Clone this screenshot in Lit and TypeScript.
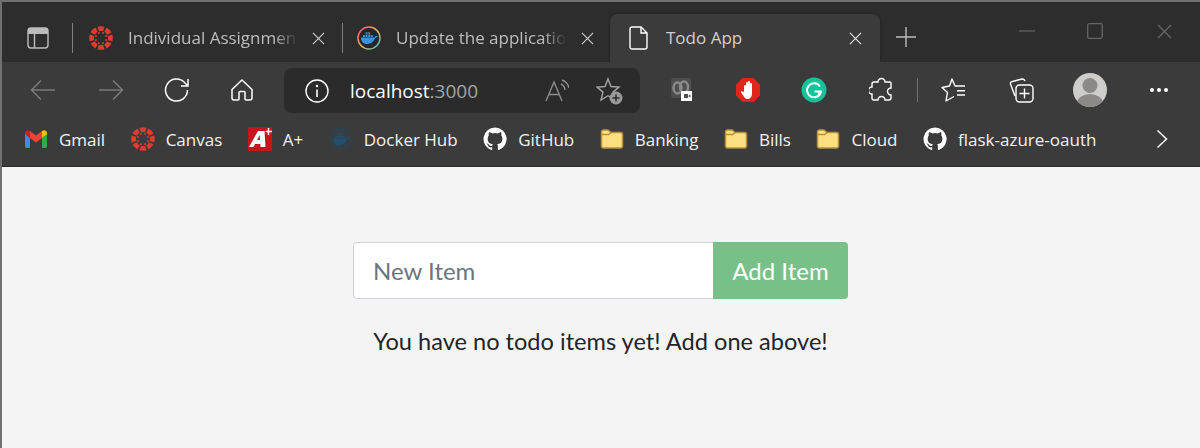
import { LitElement, html, css, svg } from "lit";
import { customElement } from "lit/decorators.js";

const canvas = (size = 24) => html`<svg width=${size} height=${size} viewBox="0 0 24 24" fill="#e13c30">
  ${[0, 45, 90, 135, 180, 225, 270, 315].map(a => svg`<g transform="rotate(${a} 12 12)"><path d="M8.55 .72A11.8 11.8 0 0 1 15.45 .72L14.05 5.31A7 7 0 0 0 9.95 5.31Z"/><circle cx="12" cy="6.5" r="1" transform="rotate(22.5 12 12)"/></g>`)}
</svg>`;
const ghPath = "M12 .5a11.500 11.500 0 0 0-3.640 22.410c.58.110.79-.25.79-.550v-2.100c-3.200.7-3.880-1.370-3.880-1.370-.52-1.330-1.280-1.680-1.280-1.680-1.040-.71.08-.7.08-.7 1.160.08 1.770 1.190 1.770 1.190 1.030 1.760 2.700 1.250 3.350.96.100-.75.400-1.250.730-1.540-2.550-.29-5.240-1.280-5.240-5.690 0-1.260.45-2.280 1.190-3.090-.12-.29-.52-1.460.11-3.050 0 0 .97-.31 3.170 1.180a11 11 0 0 1 5.770 0c2.200-1.490 3.170-1.180 3.170-1.180.63 1.590.23 2.760.11 3.050.74.81 1.190 1.830 1.190 3.090 0 4.420-2.690 5.390-5.250 5.680.41.360.78 1.050.78 2.120v3.140c0 .31.21.670.800.550A11.500 11.500 0 0 0 12 .5z";
const github = () => html`<svg width="24" height="24" viewBox="0 0 24 24"><path fill="#fff" d=${ghPath}/></svg>`;
const folder = () => html`<svg width="24" height="24" viewBox="0 0 24 24"><path d="M1.500 5a2 2 0 0 1 2-2h4.500l3 2.500h9.500a2 2 0 0 1 2 2V19a2 2 0 0 1-2 2h-17a2 2 0 0 1-2-2z" fill="#fedf82" stroke="#b8923a" stroke-width="1.500"/><path d="M1.500 7.500h7l3-2" fill="none" stroke="#b8923a" stroke-width="1.500"/></svg>`;
const docker = (fill: string) => svg`<path fill=${fill} d="M4 11.500h13.500c.6-1.200 1.700-1.700 3.200-1.300-.6 1.200-1.500 1.800-2.700 1.900C16.800 16 14 18 10 18c-4 0-6-2.600-6-6.500z"/>
  <g fill=${fill}><rect x="6" y="9" width="2" height="2"/><rect x="8.600" y="9" width="2" height="2"/><rect x="11.200" y="9" width="2" height="2"/><rect x="8.600" y="6.400" width="2" height="2"/><rect x="11.200" y="6.400" width="2" height="2"/><rect x="13.800" y="9" width="2" height="2"/></g>`;
const x = (s: number, c: string, w = 1.300) => html`<svg width=${s} height=${s} viewBox="0 0 14 14"><path d="M1 1l12 12M13 1L1 13" stroke=${c} stroke-width=${w} fill="none"/></svg>`;

@customElement("app-root")
export class AppRoot extends LitElement {
  static styles = css`
    :host { display: block; width: 1200px; height: 448px; overflow: hidden; box-sizing: border-box; border-top: 2px solid #707070; border-left: 2px solid #707070; font-family: "Open Sans", "Noto Sans", sans-serif; background: #f4f4f4; }
    svg { display: block; flex: none; }
    .strip { height: 60px; box-sizing: border-box; background: #2d2d2d; display: flex; align-items: flex-end; }
    .tabmenu { width: 70px; height: 48px; display: flex; align-items: center; padding-left: 25px; box-sizing: border-box; flex: none; }
    .sep { width: 1px; height: 30px; background: #808080; flex: none; }
    .tabsep { margin-bottom: 9px; }
    .tab { height: 48px; display: flex; align-items: center; box-sizing: border-box; color: #bdbdbd; font-size: 17px; flex: none; position: relative; }
    .tab .title { white-space: nowrap; overflow: hidden; margin-left: 15px; margin-bottom: 2px; -webkit-mask-image: linear-gradient(90deg, #000 86%, transparent); mask-image: linear-gradient(90deg, #000 86%, transparent); }
    .tab1 { width: 269px; padding-left: 16px; }
    .tab1 .title { width: 170px; }
    .tab2 { width: 267px; padding-left: 14px; }
    .tab2 .title { width: 171px; }
    .tab .close { margin-left: auto; }
    .tab1 .close { margin-right: 17px; }
    .tab2 .close { margin-right: 16px; }
    .tab3 { width: 270px; padding-left: 19px; background: #3b3b3b; border-radius: 8px 8px 0 0; color: #d0d0d0; box-shadow: 0 0 3px rgba(0,0,0,.35); }
    .tab3 .close { margin-right: 18px; }
    .tab3 .title { margin-left: 17px; -webkit-mask-image: none; mask-image: none; }
    .plus { margin-left: 15px; align-self: flex-start; margin-top: 24px; }
    .win { position: absolute; top: 22px; }
    .win-min { left: 1019px; top: 30px; }
    .win-max { left: 1087px; top: 23px; }
    .win-close { left: 1157px; top: 24px; }
    .toolbar { height: 56px; background: #3b3b3b; position: relative; display: flex; align-items: center; }
    .tb-left { display: flex; align-items: center; width: 282px; padding-left: 28px; box-sizing: border-box; gap: 42px; flex: none; }
    .nudge { margin-left: -2px; }
    .addr { width: 356px; height: 45px; background: #2b2b2b; border-radius: 8px; display: flex; align-items: center; box-sizing: border-box; padding-left: 21px; flex: none; margin-top: 1px; }
    .url { margin-left: 21px; font-size: 19px; font-weight: 500; color: #fff; }
    .url span { color: #a5a5a5; font-weight: 400; }
    .addr .read { margin-left: auto; }
    .addstar { margin-left: 27px; margin-right: 16px; }
    .tb-right { display: flex; align-items: center; flex: 1; padding-left: 29px; }
    .i-people { margin-left: 1px; }
    .i-block { margin-left: 39px; }
    .i-gram { margin-left: 40px; }
    .i-ext { margin-left: 42px; }
    .tbsep { height: 24px; margin-left: 24px; background: #707070; }
    .i-fav { margin-left: 23px; }
    .i-coll { margin-left: 41px; }
    .i-avatar { margin-left: 39px; }
    .i-dots { margin-left: 42px; }
    .bar { height: 49px; background: #3b3b3b; display: flex; align-items: center; box-sizing: border-box; padding: 0 0 6px 22px; gap: 25.5px; color: #f2f2f2; font-size: 17px; white-space: nowrap; border-bottom: 1px solid #2b2b2b; }
    .bm { display: flex; align-items: center; gap: 11px; flex: none; }
    .more { margin-left: auto; margin-right: 32px; }
    .main { display: flex; flex-direction: column; align-items: center; padding: 75px 1px 0 0; font-family: Lato, sans-serif; color: #212529; }
    .form { display: flex; width: 495px; height: 57px; }
    .input { flex: 1; border: 1px solid #ced4da; border-right: 0; border-radius: 4px 0 0 4px; background: #fff; box-sizing: border-box; padding-left: 19px; display: flex; align-items: center; font-size: 24px; color: #6c757d; }
    .btn { width: 135px; background: #77c188; color: #fff; border-radius: 0 4px 4px 0; display: flex; align-items: center; justify-content: center; font-size: 24px; }
    .empty { margin-top: 24px; font-size: 23.6px; line-height: 36px; }
  `;

  render() {
    return html`
      <div class="strip">
        <div class="tabmenu"><svg width="22" height="22" viewBox="0 0 22 22"><rect x="1" y="1" width="20" height="20" rx="3" fill="none" stroke="#bcbcbc" stroke-width="1.400"/><path d="M1 2.500a2 2 0 0 1 2-1.500h16a2 2 0 0 1 2 1.500V7H1z" fill="#bcbcbc"/><path d="M7.500 7v14" stroke="#bcbcbc" stroke-width="1.400"/></svg></div>
        <div class="sep tabsep"></div>
        <div class="tab tab1">${canvas()}<span class="title">Individual Assignment</span><span class="close">${x(13, "#c8c8c8")}</span></div>
        <div class="sep tabsep"></div>
        <div class="tab tab2">
          <svg width="24" height="24" viewBox="0 0 24 24"><defs><linearGradient id="r" x1="0" y1="0" x2="1" y2="1"><stop offset="0" stop-color="#e04f8c"/><stop offset=".5" stop-color="#f2b84b"/><stop offset="1" stop-color="#35b6d6"/></linearGradient></defs><circle cx="12" cy="12" r="11" fill="#22252b" stroke="url(#r)" stroke-width="1.500"/>${docker("#3a94dc")}</svg>
          <span class="title">Update the application</span><span class="close">${x(13, "#c8c8c8")}</span></div>
        <div class="tab tab3">
          <svg width="20" height="24" viewBox="0 0 20 24"><path d="M3 1h9l6 6v14a2 2 0 0 1-2 2H3a2 2 0 0 1-2-2V3a2 2 0 0 1 2-2zM12 1v6h6" fill="none" stroke="#fff" stroke-width="1.400"/></svg>
          <span class="title">Todo App</span><span class="close">${x(13, "#e0e0e0")}</span></div>
        <svg class="plus" width="22" height="22" viewBox="0 0 22 22"><path d="M11 1v20M1 11h20" stroke="#bdbdbd" stroke-width="1.400"/></svg>
        <svg class="win win-min" width="16" height="2" viewBox="0 0 16 2"><path d="M0 1h16" stroke="#666" stroke-width="1.200"/></svg>
        <svg class="win win-max" width="16" height="16" viewBox="0 0 16 16"><rect x=".7" y=".7" width="14.600" height="14.600" rx="1.500" fill="none" stroke="#666" stroke-width="1.300"/></svg>
        <span class="win win-close">${x(15, "#666", 1.200)}</span>
      </div>
      <div class="toolbar">
        <div class="tb-left">
          <svg width="26" height="22" viewBox="0 0 26 22"><path d="M25 11H1.500M11 1.500L1.500 11l9.500 9.500" fill="none" stroke="#7a7a7a" stroke-width="1.500"/></svg>
          <svg width="26" height="22" viewBox="0 0 26 22"><path d="M1 11h23.500M15 1.500l9.500 9.500-9.500 9.500" fill="none" stroke="#7a7a7a" stroke-width="1.500"/></svg>
          <svg class="nudge" width="26" height="26" viewBox="0 0 26 26"><path d="M23.500 13A11 11 0 1 1 20.500 5.500L24 9M24 2v7h-7" fill="none" stroke="#fff" stroke-width="1.500"/></svg>
          <svg class="nudge" width="24" height="24" viewBox="0 0 24 24"><path d="M2 11.500L12 2l10 9.500V20a2 2 0 0 1-2 2h-4a1 1 0 0 1-1-1v-6.500a1 1 0 0 0-1-1h-4a1 1 0 0 0-1 1V21a1 1 0 0 1-1 1H4a2 2 0 0 1-2-2z" fill="none" stroke="#fff" stroke-width="1.500"/></svg>
        </div>
        <div class="addr">
          <svg width="24" height="24" viewBox="0 0 24 24"><circle cx="12" cy="12" r="11" fill="none" stroke="#fff" stroke-width="1.400"/><path d="M12 10.500V18" stroke="#fff" stroke-width="1.600"/><circle cx="12" cy="7" r="1.200" fill="#fff"/></svg>
          <span class="url">localhost<span>:3000</span></span>
          <svg class="read" width="24" height="24" viewBox="0 0 24 24"><path d="M1 22L9 3l8 19M4 15.500h10" fill="none" stroke="#8e8e8e" stroke-width="1.400"/><path d="M16 5a7 7 0 0 1 4 6M17 1a11 11 0 0 1 7 8" fill="none" stroke="#8e8e8e" stroke-width="1.400"/></svg>
          <svg class="addstar" width="28" height="28" viewBox="0 0 28 28"><path d="M12 2l3 7.500 8 .6-6 5 2 7.900-7-4.300-7 4.300 2-7.900-6-5 8-.6z" fill="none" stroke="#a5a5a5" stroke-width="1.400"/><circle cx="20" cy="21" r="6.500" fill="#9a9a9a"/><path d="M20 17.500v7M16.500 21h7" stroke="#2b2b2b" stroke-width="1.500"/></svg>
        </div>
        <div class="tb-right">
          <svg class="i-people" width="26" height="26" viewBox="0 0 26 26"><rect x="1" y="1" width="20" height="20" rx="3" fill="#4e4e4e"/><ellipse cx="7.500" cy="11" rx="4" ry="5.500" fill="none" stroke="#8a8a8a" stroke-width="2.500"/><ellipse cx="14" cy="10" rx="4" ry="5.500" fill="none" stroke="#8a8a8a" stroke-width="2.500"/><rect x="11" y="14" width="11" height="10" fill="#fff"/><path d="M14 17h4v4h-4zM18 19l2.500-1.500v3z" fill="#4e4e4e"/></svg>
          <svg class="i-block" width="26" height="26" viewBox="0 0 26 26"><path d="M7.500 1h11L25 7.500v11L18.500 25h-11L1 18.500v-11z" fill="#e1251b"/><path d="M9 15V9a1 1 0 0 1 2 0v3-6a1 1 0 0 1 2 0v6-7a1 1 0 0 1 2 0v7-5a1 1 0 0 1 2 0v9c0 4-2 6-4.500 6-2 0-3-1-4-3l-2.500-3.500c-.5-1 .7-1.800 1.500-1z" fill="#fff"/></svg>
          <svg class="i-gram" width="26" height="26" viewBox="0 0 26 26"><circle cx="13" cy="13" r="12.500" fill="#15c39a"/><path d="M19 9.500a7 7 0 1 0 1 5h-6.500M20 14.500l-2.500 3" fill="none" stroke="#fff" stroke-width="2"/></svg>
          <svg class="i-ext" width="24" height="26" viewBox="0 0 24 26"><path d="M9 5a3.500 3.500 0 0 1 7 0h5a1 1 0 0 1 1 1v5a3.500 3.500 0 0 0 0 7v3a2 2 0 0 1-2 2h-4a3.500 3.500 0 0 0-7 0H5a2 2 0 0 1-2-2v-4a3.500 3.500 0 0 1 0-7V7a2 2 0 0 1 2-2z" fill="none" stroke="#fff" stroke-width="1.400"/></svg>
          <div class="sep tbsep"></div>
          <svg class="i-fav" width="26" height="26" viewBox="0 0 26 26"><path d="M24 9H14L11 2 8.500 9 1 10.500 6.500 15.500 5 24 13 19.500" fill="none" stroke="#fff" stroke-width="1.400" stroke-linejoin="round"/><path d="M16 13.700h8M16 18h8" stroke="#fff" stroke-width="1.400"/></svg>
          <svg class="i-coll" width="26" height="26" viewBox="0 0 26 26"><path d="M7 19L2.500 7c-.3-1 .2-2 1.200-2.300L14 2c1.500-.3 2.500.5 3 2" fill="none" stroke="#fff" stroke-width="1.400"/><rect x="8" y="8" width="17" height="17" rx="3.500" fill="#3b3b3b" stroke="#fff" stroke-width="1.400"/><path d="M16.500 11.500v10M11.500 16.500h10" stroke="#fff" stroke-width="1.400"/></svg>
          <svg class="i-avatar" width="34" height="34" viewBox="0 0 34 34"><defs><clipPath id="av"><circle cx="17" cy="17" r="17"/></clipPath></defs><circle cx="17" cy="17" r="17" fill="#cfcdc9"/><g clip-path="url(#av)"><circle cx="17" cy="12.500" r="7.500" fill="#8c8a86"/><ellipse cx="17" cy="30" rx="13" ry="9" fill="#8c8a86"/></g></svg>
          <svg class="i-dots" width="20" height="6" viewBox="0 0 20 6"><circle cx="3" cy="3" r="2" fill="#fff"/><circle cx="10" cy="3" r="2" fill="#fff"/><circle cx="17" cy="3" r="2" fill="#fff"/></svg>
        </div>
      </div>
      <div class="bar">
        <div class="bm"><svg width="24" height="24" viewBox="0 0 24 24"><path d="M1 6v13.500A1.500 1.500 0 0 0 2.500 21H6V11z" fill="#4285f4"/><path d="M18 11v10h3.500a1.500 1.500 0 0 0 1.500-1.500V6z" fill="#34a853"/><path d="M6 11l6 4.500 6-4.500V4l-6 4.500L6 4z" fill="#ea4335"/><path d="M1 6c0-2.500 2.800-3.500 4.500-2.300L6 4v7L1 7z" fill="#c5221f"/><path d="M18 4l.5-.3C20.200 2.500 23 3.500 23 6v1l-5 4z" fill="#fbbc04"/></svg><span>Gmail</span></div>
        <div class="bm">${canvas()}<span>Canvas</span></div>
        <div class="bm"><svg width="24" height="24" viewBox="0 0 24 24"><rect width="24" height="24" fill="#c4161c"/><path d="M1 20L10 4h6.500l1 16h-5l-.2-3H7l-1.500 3zM9 13h3l-.3-5z" fill="#fff"/><path d="M20.500 1v7M17.500 4.500h6.500" stroke="#fff" stroke-width="1.500"/></svg><span>A+</span></div>
        <div class="bm"><svg width="24" height="24" viewBox="0 0 24 24"><circle cx="12" cy="12" r="11" fill="#383d41" stroke="#1e4660"/>${docker("#234f6e")}</svg><span>Docker Hub</span></div>
        <div class="bm">${github()}<span>GitHub</span></div>
        <div class="bm">${folder()}<span>Banking</span></div>
        <div class="bm">${folder()}<span>Bills</span></div>
        <div class="bm">${folder()}<span>Cloud</span></div>
        <div class="bm">${github()}<span>flask-azure-oauth</span></div>
        <svg class="more" width="12" height="20" viewBox="0 0 12 20"><path d="M1.500 1.500L10.500 10l-9 8.500" fill="none" stroke="#fff" stroke-width="1.500"/></svg>
      </div>
      <div class="main">
        <div class="form"><div class="input">New Item</div><div class="btn">Add Item</div></div>
        <div class="empty">You have no todo items yet! Add one above!</div>
      </div>
    `;
  }
}
